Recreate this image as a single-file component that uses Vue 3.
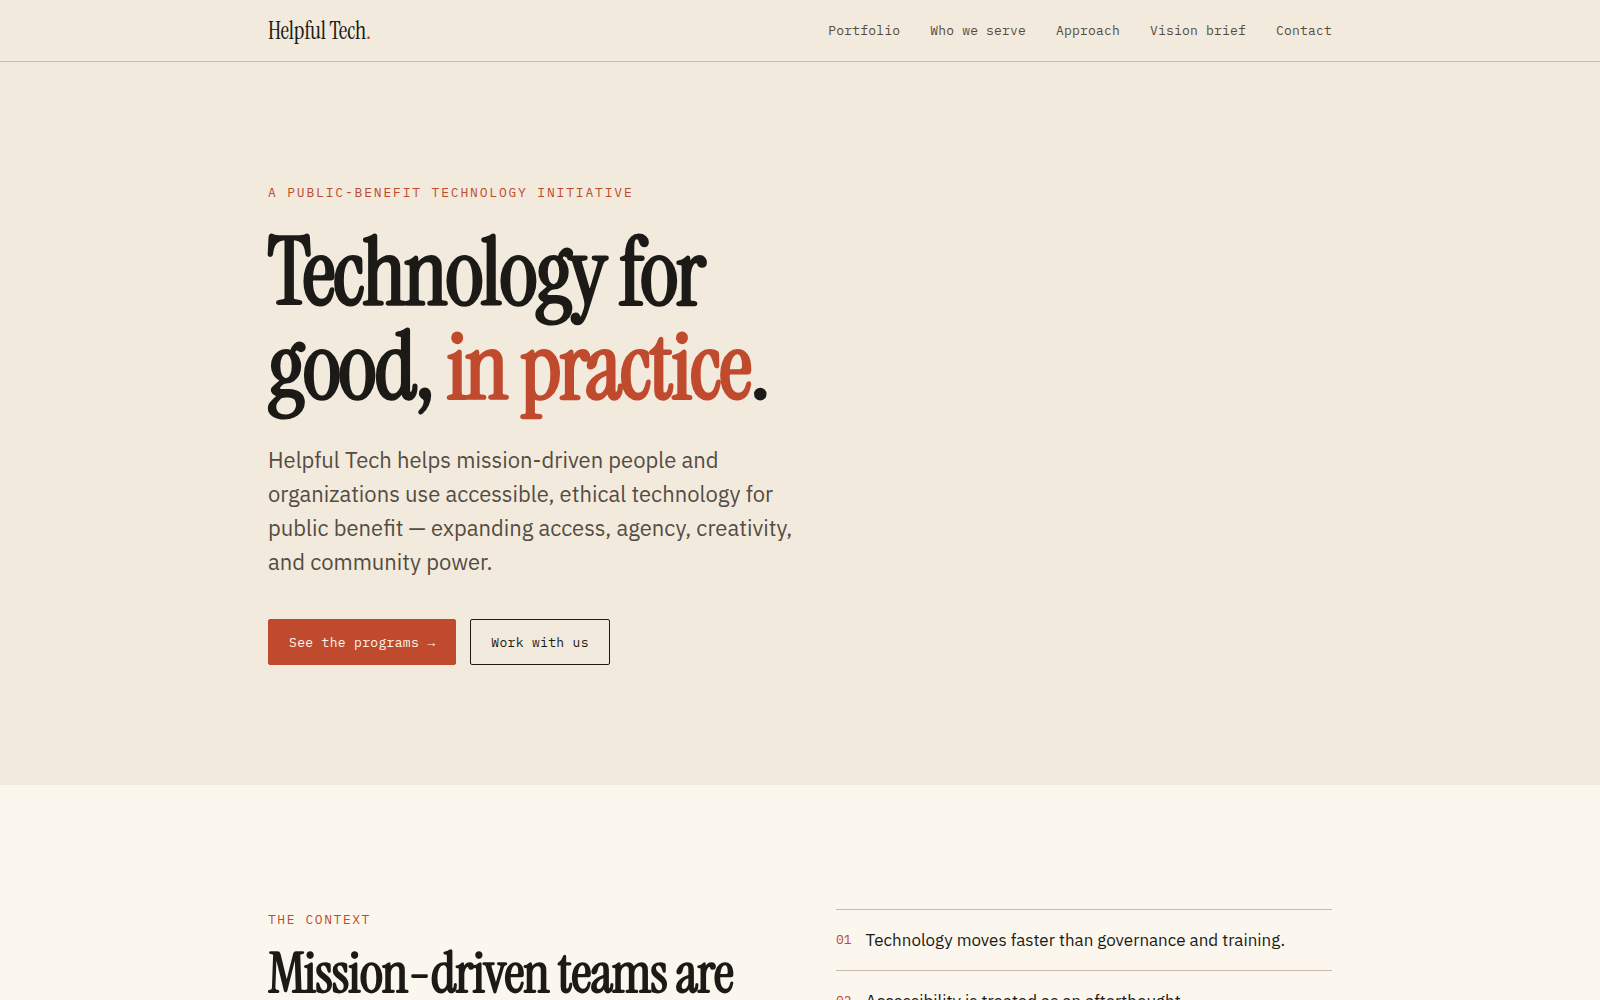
<template>
  <div class="page">
    <header class="site-header">
      <div class="wrap header-row">
        <a class="brand" href="#top">Helpful Tech<span class="accent">.</span></a>
        <nav class="nav" aria-label="Main">
          <a v-for="link in links" :key="link.href" :href="link.href">{{ link.label }}</a>
        </nav>
      </div>
    </header>

    <main>
      <section id="top" class="hero">
        <div class="wrap">
          <p class="eyebrow wide">A public-benefit technology initiative</p>
          <h1>Technology for<br />good, <span class="accent">in practice</span>.</h1>
          <p class="lede">
            Helpful Tech helps mission-driven people and organizations use accessible, ethical
            technology for public benefit — expanding access, agency, creativity, and community
            power.
          </p>
          <div class="actions">
            <button type="button" class="btn primary" @click="goTo('portfolio')">
              See the programs <span class="arrow">→</span>
            </button>
            <button type="button" class="btn" @click="goTo('contact')">Work with us</button>
          </div>
        </div>
      </section>

      <section class="context">
        <div class="wrap context-grid">
          <div>
            <p class="eyebrow">The context</p>
            <h2>Mission-driven teams are</h2>
          </div>
          <ol class="issues">
            <li v-for="(issue, i) in issues" :key="issue">
              <span class="num">{{ String(i + 1).padStart(2, '0') }}</span>
              <span>{{ issue }}</span>
            </li>
          </ol>
        </div>
      </section>
    </main>
  </div>
</template>

<script setup>
const links = [
  { label: 'Portfolio', href: '#portfolio' },
  { label: 'Who we serve', href: '#serve' },
  { label: 'Approach', href: '#approach' },
  { label: 'Vision brief', href: '#vision' },
  { label: 'Contact', href: '#contact' }
]

const issues = [
  'Technology moves faster than governance and training.',
  'Accessibility is treated as an afterthought.'
]

const goTo = (id) => {
  window.location.hash = id
}
</script>

<style>
body {
  margin: 0;
  background: #fbf7ee;
}
</style>

<style scoped>
.page {
  --paper: #f2eadc;
  --cream: #fbf7ee;
  --ink: #1b1a16;
  --muted: #544c43;
  --accent: #c04a2d;
  --line: #c9bba7;
  --serif: "Instrument Serif", "Liberation Serif", serif;
  --sans: "IBM Plex Sans", Roboto, sans-serif;
  --mono: "IBM Plex Mono", "Liberation Mono", monospace;
  color: var(--ink);
  font-family: var(--sans);
}

.wrap {
  max-width: 1064px;
  margin: 0 auto;
  padding: 0 32px;
}

.accent {
  color: var(--accent);
}

/* header */
.site-header {
  background: var(--paper);
  border-bottom: 1px solid var(--line);
}

.header-row {
  display: flex;
  align-items: center;
  justify-content: space-between;
  min-height: 61px;
}

.brand {
  font-family: var(--serif);
  font-size: 24px;
  letter-spacing: -0.01em;
  color: var(--ink);
  text-decoration: none;
}

.nav {
  display: flex;
  gap: 30px;
}

.nav a {
  font-family: var(--mono);
  font-size: 13px;
  letter-spacing: 0.015em;
  color: var(--muted);
  text-decoration: none;
}

/* hero */
.hero {
  background: var(--paper);
  padding: 120px 0;
}

.eyebrow {
  margin: 0;
  font-family: var(--mono);
  font-size: 13px;
  line-height: 22px;
  letter-spacing: 0.12em;
  text-transform: uppercase;
  color: var(--accent);
}

.eyebrow.wide {
  letter-spacing: 0.14em;
}

h1 {
  margin: 22px 0 29px;
  font-family: var(--serif);
  font-size: 92px;
  font-weight: 700;
  line-height: 94px;
  letter-spacing: -0.02em;
}

.lede {
  max-width: 560px;
  margin: 0;
  font-size: 22px;
  line-height: 34px;
  color: var(--muted);
}

.actions {
  display: flex;
  flex-wrap: wrap;
  gap: 14px;
  margin-top: 40px;
}

.btn {
  padding: 13px 20px 11px;
  border: 1px solid var(--ink);
  border-radius: 2px;
  background: transparent;
  color: var(--ink);
  font-family: var(--mono);
  font-size: 13px;
  line-height: 20px;
  letter-spacing: 0.025em;
  cursor: pointer;
}

.btn.primary {
  border-color: var(--accent);
  background: var(--accent);
  color: var(--cream);
}

.arrow {
  font-family: "Liberation Mono", monospace;
  line-height: 1;
}

/* context */
.context {
  background: var(--cream);
  padding: 124px 0;
}

.context-grid {
  display: grid;
  grid-template-columns: 1fr 1fr;
  gap: 72px;
}

h2 {
  margin: 12px 0 0;
  font-family: var(--serif);
  font-size: 56px;
  font-weight: 700;
  line-height: 60px;
  letter-spacing: -0.015em;
}

.issues {
  margin: 0;
  padding: 0;
  list-style: none;
}

.issues li {
  display: flex;
  align-items: center;
  gap: 14px;
  padding: 17px 0;
  border-top: 1px solid var(--line);
  font-size: 17px;
  line-height: 26px;
}

.num {
  font-family: var(--mono);
  font-size: 13px;
  color: var(--accent);
}
</style>
